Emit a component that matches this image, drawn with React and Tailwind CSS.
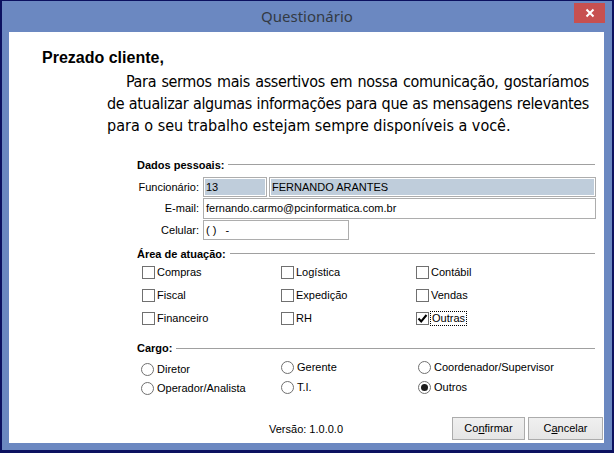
import React from 'react';

function Legend({ children, lineTop = 'mt-[6px]' }) {
  return (
    <div className="flex items-start h-[14px] pl-px">
      <span className="font-bold leading-[14px] text-black whitespace-nowrap">{children}</span>
      <div className={`flex-1 ml-[4px] mr-px h-px bg-[#a0a0a0] ${lineTop}`} />
    </div>
  );
}

function Field({ label, height = 'h-[20px]', children }) {
  return (
    <div className={`flex items-center gap-[4px] ${height}`}>
      <span className="w-[63px] text-right whitespace-nowrap">{label}</span>
      {children}
    </div>
  );
}

function Check({ label, checked, focused }) {
  return (
    <div className="flex items-center h-[13px]">
      <span className="w-[13px] h-[13px] border border-[#707070] bg-white flex items-center justify-center shrink-0">
        {checked && (
          <svg width="11" height="11" viewBox="0 0 11 11">
            <path d="M1.5 5.5 L4.2 8.5 L9.5 2" stroke="#000" strokeWidth="2" fill="none" />
          </svg>
        )}
      </span>
      {focused ? (
        <span className="ml-[1px] px-px leading-[13px] border border-dotted border-black">{label}</span>
      ) : (
        <span className="ml-[2px] leading-[13px]">{label}</span>
      )}
    </div>
  );
}

function Radio({ label, checked }) {
  return (
    <div className="flex items-center h-[13px]">
      <span className="w-[13px] h-[13px] rounded-full border border-[#707070] bg-white flex items-center justify-center shrink-0">
        {checked && <span className="w-[7px] h-[7px] rounded-full bg-[#1c1c1c]" />}
      </span>
      <span className="ml-[3px] leading-[13px]">{label}</span>
    </div>
  );
}

export default function App() {
  return (
    <div className="w-[614px] h-[453px] flex flex-col bg-[#6b88c1] border-[#0c1160] border-t border-x-2 border-b-[3px] font-['Liberation_Sans',Arial,sans-serif] text-[11px] text-black">
      {/* title bar */}
      <div className="h-[31px] flex items-start shrink-0">
        <div className="w-[38px] shrink-0" />
        <div className="flex-1 text-center pt-[5px] font-['Noto_Sans',sans-serif] text-[15px] leading-[20px] text-[#333a44]">
          Questionário
        </div>
        <div className="mt-[2px] mr-[7px] w-[31px] h-[20px] bg-[#c75050] flex items-center justify-center">
          <svg width="10" height="10" viewBox="0 0 10 10">
            <path d="M1.5 1.5 L8.5 8.5 M8.5 1.5 L1.5 8.5" stroke="#fff" strokeWidth="2" />
          </svg>
        </div>
      </div>

      {/* client area */}
      <div className="flex-1 min-h-0 ml-[7px] mr-[8px] mb-[7px] bg-white flex flex-col pt-[17px] pl-[33px]">
        <h1 className="text-[16px] font-bold leading-[18px]">Prezado cliente,</h1>

        <div className="mt-[4px] ml-[65px] w-[482px] font-['DejaVu_Sans_Condensed','Liberation_Sans',sans-serif] text-[16px] leading-[22px] whitespace-nowrap">
          <div className="pl-[19px] tracking-[-0.35px] text-justify [text-align-last:justify]">
            Para sermos mais assertivos em nossa comunicação, gostaríamos
          </div>
          <div className="tracking-[-0.35px] text-justify [text-align-last:justify]">
            de atualizar algumas informações para que as mensagens relevantes
          </div>
          <div>para o seu trabalho estejam sempre disponíveis a você.</div>
        </div>

        <div className="mt-[21px] ml-[94px] w-[460px] flex flex-col">
          <Legend>Dados pessoais:</Legend>

          <div className="mt-[5px] flex flex-col gap-px">
            <Field label="Funcionário:">
              <div className="w-[64px] h-full border border-[#adadad] p-px">
                <div className="h-full bg-[#bfcddb] pl-[1px] flex items-center">13</div>
              </div>
              <div className="flex-1 -ml-[2px] h-full border border-[#adadad] p-px">
                <div className="h-full bg-[#bfcddb] pl-[1px] flex items-center">FERNANDO ARANTES</div>
              </div>
            </Field>
            <Field label="E-mail:" height="h-[21px]">
              <div className="flex-1 h-full border border-[#adadad] pl-[2px] flex items-center">
                fernando.carmo@pcinformatica.com.br
              </div>
            </Field>
            <Field label="Celular:">
              <div className="w-[146px] h-full border border-[#adadad] pl-[2px] flex items-center whitespace-pre">
                {'( )   -'}
              </div>
            </Field>
          </div>

          <div className="mt-[7px]">
            <Legend lineTop="mt-[6px]">Área de atuação:</Legend>
          </div>

          <div className="mt-[5px] pl-[6px] grid grid-cols-[139px_135px_1fr] gap-y-[10px]">
            <Check label="Compras" />
            <Check label="Logística" />
            <Check label="Contábil" />
            <Check label="Fiscal" />
            <Check label="Expedição" />
            <Check label="Vendas" />
            <Check label="Financeiro" />
            <Check label="RH" />
            <Check label="Outras" checked focused />
          </div>

          <div className="mt-[16px]">
            <Legend lineTop="mt-[7px]">Cargo:</Legend>
          </div>

          <div className="mt-[6px] pl-[5px] grid grid-cols-[140px_137px_1fr]">
            <div className="flex flex-col gap-[6px] pt-[2px]">
              <Radio label="Diretor" />
              <Radio label="Operador/Analista" />
            </div>
            <div className="flex flex-col gap-[7px]">
              <Radio label="Gerente" />
              <Radio label="T.I." />
            </div>
            <div className="flex flex-col gap-[7px]">
              <Radio label="Coordenador/Supervisor" />
              <Radio label="Outros" checked />
            </div>
          </div>
        </div>

        <div className="mt-auto -ml-[33px] pb-[3px] pr-px grid grid-cols-[1fr_auto_1fr] items-center">
          <div />
          <div className="pt-[1px]">Versão: 1.0.0.0</div>
          <div className="flex justify-end gap-[3px]">
            <button className="w-[73px] h-[23px] border border-[#acacac] bg-gradient-to-b from-[#f0f0f0] to-[#e5e5e5] text-[11px]">
              Co<u>n</u>firmar
            </button>
            <button className="w-[75px] h-[23px] border border-[#acacac] bg-gradient-to-b from-[#f0f0f0] to-[#e5e5e5] text-[11px]">
              C<u>a</u>ncelar
            </button>
          </div>
        </div>
      </div>
    </div>
  );
}
